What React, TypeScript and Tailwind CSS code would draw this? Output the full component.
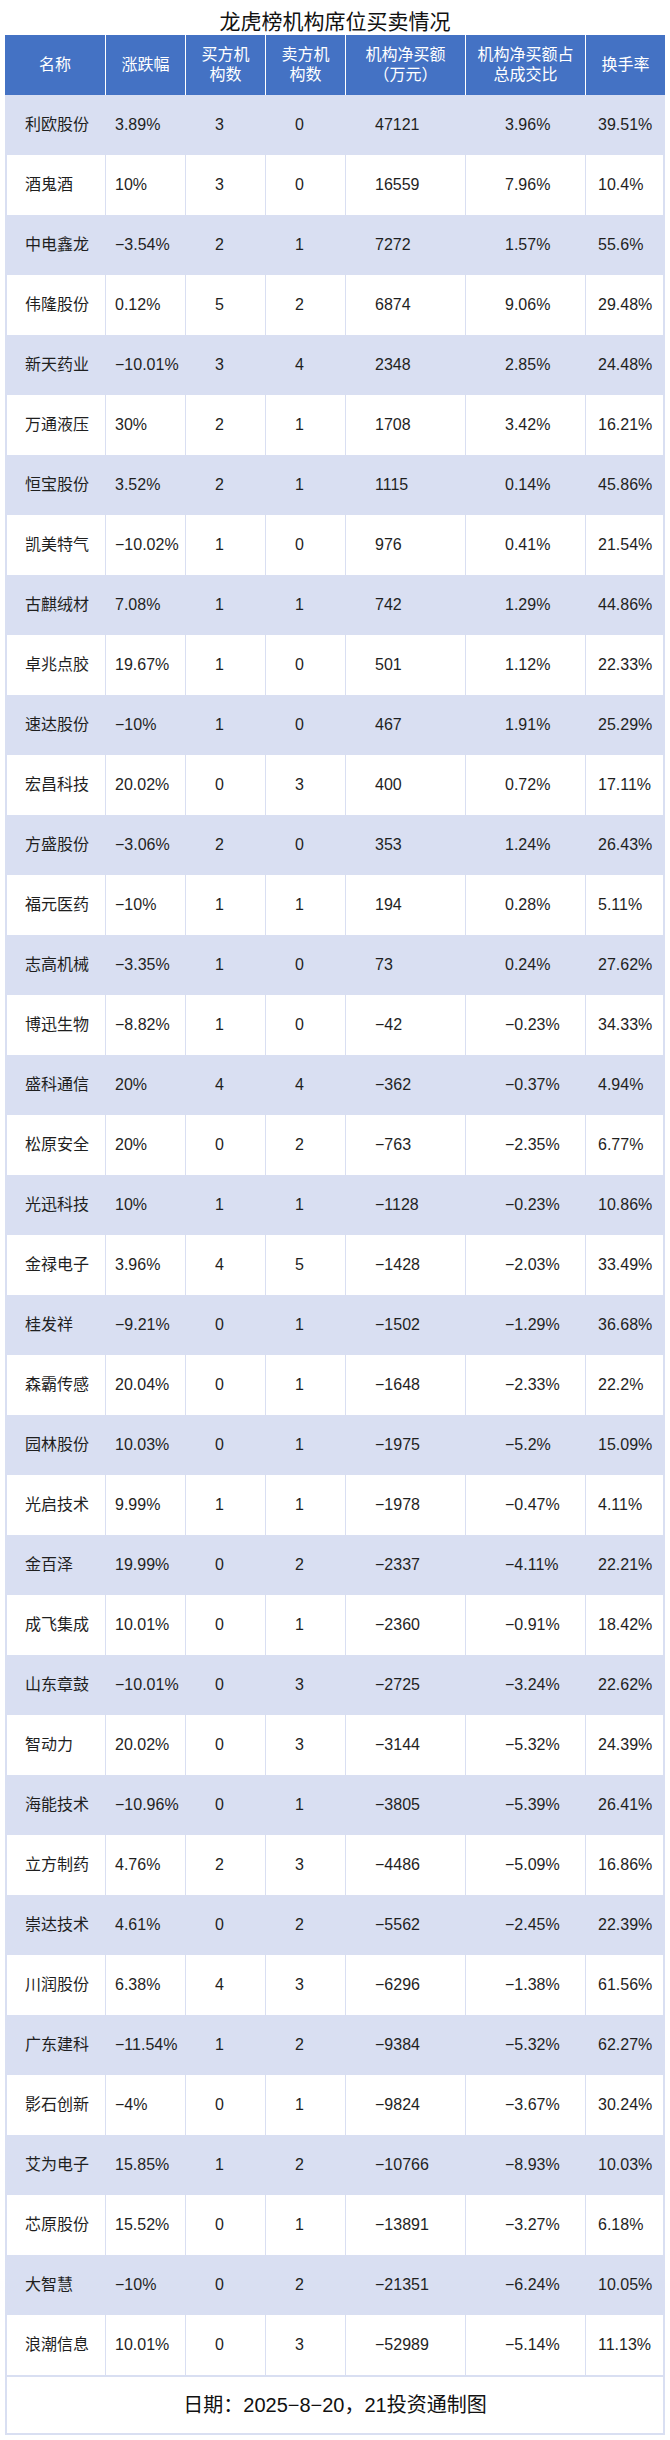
import React from "react";

type Row = [string, string, number, number, string, string, string];

const ROWS: Row[] = [
  ["利欧股份", "3.89%", 3, 0, "47121", "3.96%", "39.51%"],
  ["酒鬼酒", "10%", 3, 0, "16559", "7.96%", "10.4%"],
  ["中电鑫龙", "−3.54%", 2, 1, "7272", "1.57%", "55.6%"],
  ["伟隆股份", "0.12%", 5, 2, "6874", "9.06%", "29.48%"],
  ["新天药业", "−10.01%", 3, 4, "2348", "2.85%", "24.48%"],
  ["万通液压", "30%", 2, 1, "1708", "3.42%", "16.21%"],
  ["恒宝股份", "3.52%", 2, 1, "1115", "0.14%", "45.86%"],
  ["凯美特气", "−10.02%", 1, 0, "976", "0.41%", "21.54%"],
  ["古麒绒材", "7.08%", 1, 1, "742", "1.29%", "44.86%"],
  ["卓兆点胶", "19.67%", 1, 0, "501", "1.12%", "22.33%"],
  ["速达股份", "−10%", 1, 0, "467", "1.91%", "25.29%"],
  ["宏昌科技", "20.02%", 0, 3, "400", "0.72%", "17.11%"],
  ["方盛股份", "−3.06%", 2, 0, "353", "1.24%", "26.43%"],
  ["福元医药", "−10%", 1, 1, "194", "0.28%", "5.11%"],
  ["志高机械", "−3.35%", 1, 0, "73", "0.24%", "27.62%"],
  ["博迅生物", "−8.82%", 1, 0, "−42", "−0.23%", "34.33%"],
  ["盛科通信", "20%", 4, 4, "−362", "−0.37%", "4.94%"],
  ["松原安全", "20%", 0, 2, "−763", "−2.35%", "6.77%"],
  ["光迅科技", "10%", 1, 1, "−1128", "−0.23%", "10.86%"],
  ["金禄电子", "3.96%", 4, 5, "−1428", "−2.03%", "33.49%"],
  ["桂发祥", "−9.21%", 0, 1, "−1502", "−1.29%", "36.68%"],
  ["森霸传感", "20.04%", 0, 1, "−1648", "−2.33%", "22.2%"],
  ["园林股份", "10.03%", 0, 1, "−1975", "−5.2%", "15.09%"],
  ["光启技术", "9.99%", 1, 1, "−1978", "−0.47%", "4.11%"],
  ["金百泽", "19.99%", 0, 2, "−2337", "−4.11%", "22.21%"],
  ["成飞集成", "10.01%", 0, 1, "−2360", "−0.91%", "18.42%"],
  ["山东章鼓", "−10.01%", 0, 3, "−2725", "−3.24%", "22.62%"],
  ["智动力", "20.02%", 0, 3, "−3144", "−5.32%", "24.39%"],
  ["海能技术", "−10.96%", 0, 1, "−3805", "−5.39%", "26.41%"],
  ["立方制药", "4.76%", 2, 3, "−4486", "−5.09%", "16.86%"],
  ["崇达技术", "4.61%", 0, 2, "−5562", "−2.45%", "22.39%"],
  ["川润股份", "6.38%", 4, 3, "−6296", "−1.38%", "61.56%"],
  ["广东建科", "−11.54%", 1, 2, "−9384", "−5.32%", "62.27%"],
  ["影石创新", "−4%", 0, 1, "−9824", "−3.67%", "30.24%"],
  ["艾为电子", "15.85%", 1, 2, "−10766", "−8.93%", "10.03%"],
  ["芯原股份", "15.52%", 0, 1, "−13891", "−3.27%", "6.18%"],
  ["大智慧", "−10%", 0, 2, "−21351", "−6.24%", "10.05%"],
  ["浪潮信息", "10.01%", 0, 3, "−52989", "−5.14%", "11.13%"],
];

const FONT = { fontFamily: '"Liberation Sans", "Noto Sans CJK SC", sans-serif' };

function HeaderCell({ className, children }: { className: string; children: React.ReactNode }) {
  return (
    <div className={`flex h-full items-center justify-center text-center leading-[20px] ${className}`}>
      <div>{children}</div>
    </div>
  );
}

export default function App() {
  return (
    <div className="w-[670px] bg-white pb-[5px] text-[#1f1f1f]" style={FONT}>
      <div className="pt-[9px] text-center text-[21px] leading-[26px] text-[#111]">龙虎榜机构席位买卖情况</div>

      <div className="ml-[5px] w-[660px]">
        {/* header */}
        <div className="flex h-[60px] bg-[#4472c4] text-[16px] text-white">
          <HeaderCell className="w-[100px]">名称</HeaderCell>
          <HeaderCell className="w-[80px] border-l border-white">涨跌幅</HeaderCell>
          <HeaderCell className="w-[80px] border-l border-white">
            买方机<br />构数
          </HeaderCell>
          <HeaderCell className="w-[80px] border-l border-white">
            卖方机<br />构数
          </HeaderCell>
          <HeaderCell className="w-[120px] border-l border-white">
            机构净买额<br />（万元）
          </HeaderCell>
          <HeaderCell className="w-[120px] border-l border-white">
            机构净买额占<br />总成交比
          </HeaderCell>
          <HeaderCell className="flex-1 border-l border-white">换手率</HeaderCell>
        </div>

        {/* body */}
        {ROWS.map((r, i) => (
          <div
            key={r[0]}
            className={`flex h-[60px] items-stretch border-x-2 border-[#d9dff2] text-[16px] ${
              i % 2 === 0 ? "bg-[#d9dff2]" : "bg-white"
            }`}
          >
            <div className="flex w-[98px] items-center pl-[18px]">{r[0]}</div>
            <div className="flex w-[80px] items-center border-l border-[#d9dff2] pl-[9px]">{r[1]}</div>
            <div className="flex w-[80px] items-center border-l border-[#d9dff2] pl-[29px]">{r[2]}</div>
            <div className="flex w-[80px] items-center border-l border-[#d9dff2] pl-[29px]">{r[3]}</div>
            <div className="flex w-[120px] items-center border-l border-[#d9dff2] pl-[29px]">{r[4]}</div>
            <div className="flex w-[120px] items-center border-l border-[#d9dff2] pl-[39px]">{r[5]}</div>
            <div className="flex flex-1 items-center border-l border-[#d9dff2] pl-[12px]">{r[6]}</div>
          </div>
        ))}

        {/* footer */}
        <div className="flex h-[60px] items-center justify-center border-2 border-[#d9dff2] bg-white text-[20px] text-[#111]">
          日期：2025−8−20，21投资通制图
        </div>
      </div>
    </div>
  );
}
